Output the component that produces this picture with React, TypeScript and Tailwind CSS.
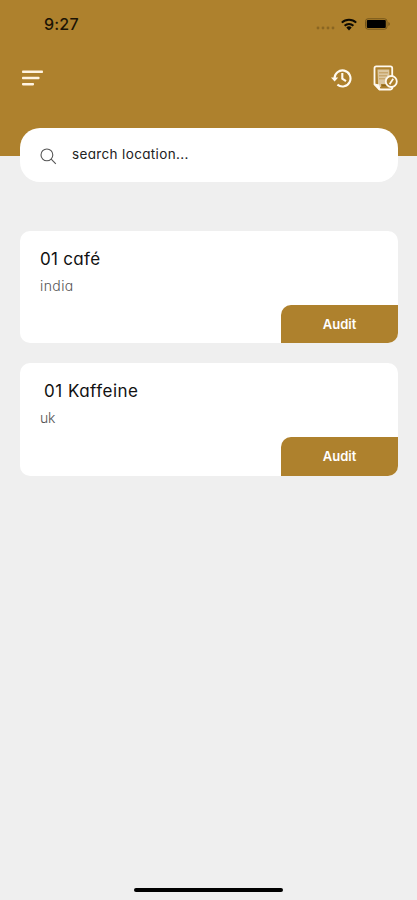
import React from 'react';

interface Place {
  name: string;
  country: string;
  nameClass: string;
  countryClass: string;
  cardClass: string;
  buttonClass: string;
}

const places: Place[] = [
  {
    name: '01 café',
    country: 'india',
    nameClass: 'tracking-[0.3px]',
    countryClass: 'tracking-[0.4px]',
    cardClass: 'h-[112px]',
    buttonClass: 'h-[38px] pt-px',
  },
  {
    name: '01 Kaffeine',
    country: 'uk',
    nameClass: 'pl-1 tracking-[0.5px]',
    countryClass: 'tracking-[-0.2px]',
    cardClass: 'h-[113px]',
    buttonClass: 'h-[39px]',
  },
];

const StatusBar: React.FC = () => (
  <div className="flex h-12 items-center justify-between pl-11 pr-[26px]">
    <span className="text-[16px] font-medium leading-6 tracking-[0.2px] text-[#1b1405]">9:27</span>
    <div className="flex items-center">
      <svg width="20" height="4" viewBox="0 0 20 4" className="mt-2 mr-1" fill="#8a6622">
        <circle cx="2" cy="2" r="1.4" />
        <circle cx="7" cy="2" r="1.4" />
        <circle cx="12" cy="2" r="1.4" />
        <circle cx="17" cy="2" r="1.4" />
      </svg>
      <svg width="18" height="13" viewBox="0 0 18 13" className="mr-[7px]" fill="none" stroke="#0d0a02" strokeWidth="2">
        <path d="M1.8 4.600a10.300 10.300 0 0 1 14.400 0" />
        <path d="M4.600 7.700a6.300 6.300 0 0 1 8.800 0" />
        <path d="M9 12.400 6.300 9.600a3.800 3.800 0 0 1 5.400 0z" fill="#0d0a02" stroke="none" />
      </svg>
      <svg width="26" height="12" viewBox="0 0 26 12">
        <rect x="0.5" y="0.8" width="21.5" height="10.4" rx="2.5" fill="none" stroke="#735419" />
        <rect x="1.8" y="2" width="19" height="8" rx="1" fill="#000" />
        <path d="M23.4 4v4c1.9-.7 1.9-3.3 0-4z" fill="#735419" />
      </svg>
    </div>
  </div>
);

const HistoryIcon: React.FC = () => (
  <svg width="22" height="20" viewBox="0 0 22 20" fill="none" stroke="#fffaf0" strokeWidth="2.1">
    <path d="M3.5 10.6a8 8 0 1 1 2.9 6" />
    <path d="M0 9.6h7.2l-3.6 4z" fill="#fffaf0" stroke="none" />
    <path d="M11.3 5v5.6l3.7 2.5" />
  </svg>
);

const ReportIcon: React.FC = () => (
  <svg width="25" height="26" viewBox="0 0 25 26" fill="none" stroke="#fffaf0" strokeWidth="1.8">
    <path d="M1.5 19.500V3.200C1.500 2 2.200 1.400 3.200 1.400h14.200c1.100 0 1.800.600 1.800 1.700v20.500c-.400.600-1 .900-1.900.900H6.500z" />
    <path d="M4.500 4.500h11.800V19H8v3H5v-4z" fill="#dcc7a0" stroke="none" />
    <path d="M6 7.800h9M6 10.800h8M6 13.800h6" stroke="#c09b58" strokeWidth="1" />
    <path d="M9 20.500h6" stroke="#8f681c" strokeWidth="1.500" />
    <path d="m1.500 18.500 4.700 1 1.300 5h-2z" fill="#fffaf0" stroke="none" />
    <circle cx="18.300" cy="16.500" r="5.500" fill="#ae812d" />
    <path d="m20.200 13.800-3.600 5.400" strokeWidth="1.700" />
  </svg>
);

const PlaceCard: React.FC<{ place: Place }> = ({ place }) => (
  <div className={`flex flex-col justify-between overflow-hidden rounded-[10px] bg-white ${place.cardClass}`}>
    <div className="pl-5 pt-4">
      <h2 className={`whitespace-pre text-[17px] leading-6 text-[#111111] ${place.nameClass}`}>{place.name}</h2>
      <p className={`mt-[5px] text-[14px] font-light leading-5 text-[#555555] ${place.countryClass}`}>{place.country}</p>
    </div>
    <button
      className={`w-[117px] self-end rounded-tl-[10px] bg-[#ae812d] text-[13px] font-semibold text-white ${place.buttonClass}`}
    >
      Audit
    </button>
  </div>
);

export default function App() {
  return (
    <div className="flex h-[900px] w-[417px] flex-col overflow-hidden bg-[#efefef] font-['Inter',sans-serif] [font-feature-settings:'cv11']">
      <header className="h-[156px] shrink-0 bg-[#ae812d]">
        <StatusBar />
        <div className="flex h-[60px] items-center justify-between pl-[22px] pr-[19px]">
          <svg width="21" height="16" viewBox="0 0 21 16" fill="#fff4e2">
            <rect y="0.5" width="21" height="2.5" rx="0.8" />
            <rect y="6.7" width="17.5" height="2.5" rx="0.8" />
            <rect y="12.9" width="12" height="2.5" rx="0.8" />
          </svg>
          <div className="flex items-center gap-5">
            <HistoryIcon />
            <ReportIcon />
          </div>
        </div>
      </header>

      <div className="ml-5 mr-[19px] -mt-7 flex h-[54px] shrink-0 items-center rounded-[20px] bg-white pl-5">
        <svg width="17" height="17" viewBox="0 0 17 17" className="mt-[3px]" fill="none" stroke="#555555" strokeWidth="1.1">
          <circle cx="6.9" cy="6.9" r="5.9" />
          <path d="m11.2 11.2 4.6 4.6" />
        </svg>
        <span className="-mt-0.5 ml-[15px] text-[13.5px] leading-5 tracking-[0.35px] text-[#222222]">search location...</span>
      </div>

      <main className="ml-5 mr-[19px] mt-[49px] flex flex-1 flex-col gap-5">
        {places.map(place => (
          <PlaceCard key={place.name} place={place} />
        ))}
      </main>

      <div className="mb-2 h-1 w-[149px] shrink-0 self-center rounded-full bg-black" />
    </div>
  );
}
